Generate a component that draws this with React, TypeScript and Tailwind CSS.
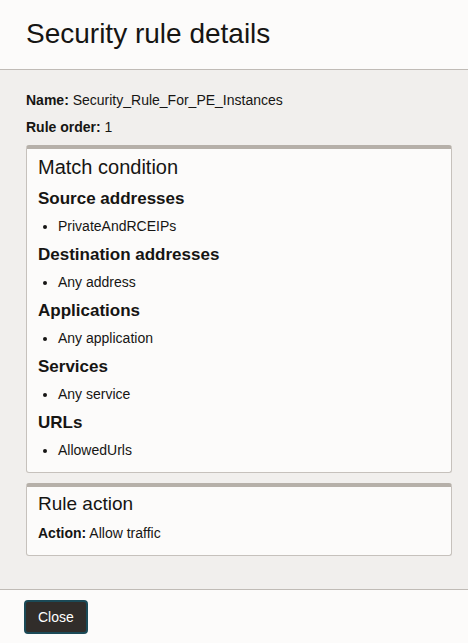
export default function App() {
  const sections: [string, string][] = [
    ["Source addresses", "PrivateAndRCEIPs"],
    ["Destination addresses", "Any address"],
    ["Applications", "Any application"],
    ["Services", "Any service"],
    ["URLs", "AllowedUrls"],
  ];
  return (
    <div className="w-[468px] h-[643px] flex flex-col bg-[#fcfbfa] text-[#161513]" style={{ fontFamily: '"Liberation Sans", Arial, sans-serif' }}>
      <div className="h-[70px] border-b border-[#c0bbb6] flex items-center px-[26px]">
        <h1 className="text-[28px] leading-none pb-[1px]">Security rule details</h1>
      </div>
      <div className="flex-1 bg-[#f1efed] pl-[26px] pr-[16px] pt-[21px] border-b border-[#c0bbb6]">
        <div className="text-[14px] leading-[18px]"><b>Name:</b> Security_Rule_For_PE_Instances</div>
        <div className="text-[14px] leading-[18px] mt-[9px]"><b>Rule order:</b> 1</div>
        <div className="mt-[9px] bg-[#fcfbfa] border border-[#c6c1bc] border-t-[4px] border-t-[#b6b0a9] rounded-[3px] px-[11px] pt-[5px] pb-[13px]">
          <div className="text-[20px] leading-[26px]">Match condition</div>
          {sections.map(([h, v], i) => (
            <div key={h} className={i === 0 ? "mt-[9px]" : "mt-[10px]"}>
              <div className="text-[17px] font-bold leading-[20px]">{h}</div>
              <ul className="list-disc pl-[20px] mt-[8px] text-[14px] leading-[18px]">
                <li>{v}</li>
              </ul>
            </div>
          ))}
        </div>
        <div className="mt-[10px] bg-[#fcfbfa] border border-[#c6c1bc] border-t-[4px] border-t-[#b6b0a9] rounded-[3px] px-[11px] pt-[4px] pb-[13px]">
          <div className="text-[19px] leading-[26px]">Rule action</div>
          <div className="text-[14px] leading-[18px] mt-[7px]"><b>Action:</b> Allow traffic</div>
        </div>
      </div>
      <div className="h-[53px] px-[24px] pt-[10px]">
        <button className="h-[34px] px-[12px] bg-[#312d2a] text-white text-[14px] rounded-[4px] border-2 border-[#1b4a57]">Close</button>
      </div>
    </div>
  );
}
